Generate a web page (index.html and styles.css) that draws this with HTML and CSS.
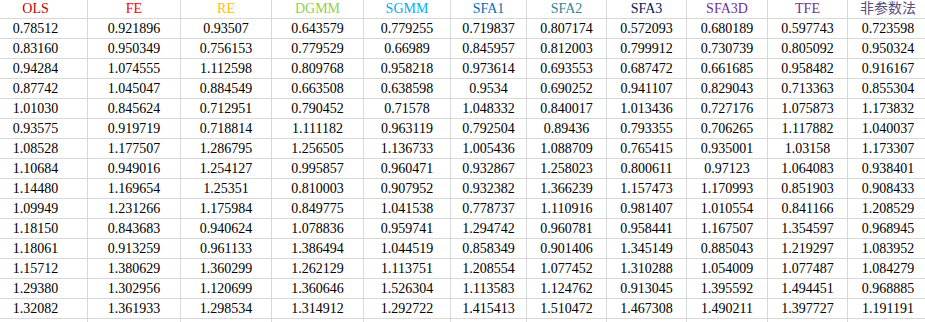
FILE: index.html
```html
<!DOCTYPE html>
<html lang="zh-CN">
<head>
  <meta charset="UTF-8">
  <meta name="viewport" content="width=device-width, initial-scale=1.0">
  <title>效率估计对比</title>
  <link rel="stylesheet" href="styles.css">
</head>
<body>
  <table class="sheet">
    <colgroup>
      <col class="c-first">
      <col class="c-93"><col class="c-91"><col class="c-92"><col class="c-87"><col class="c-76">
      <col class="c-80"><col class="c-80"><col class="c-81"><col class="c-80"><col class="c-81">
    </colgroup>
    <thead>
      <tr>
        <th class="h-ols">OLS</th>
        <th class="h-fe">FE</th>
        <th class="h-re">RE</th>
        <th class="h-dgmm">DGMM</th>
        <th class="h-sgmm">SGMM</th>
        <th class="h-sfa1">SFA1</th>
        <th class="h-sfa2">SFA2</th>
        <th class="h-sfa3">SFA3</th>
        <th class="h-sfa3d">SFA3D</th>
        <th class="h-tfe">TFE</th>
        <th class="h-np">非参数法</th>
      </tr>
    </thead>
    <tbody id="rows">
      <!-- filled from data below -->
    </tbody>
  </table>

  <script>
    const data = [
      ['0.78512', '0.921896', '0.93507', '0.643579', '0.779255', '0.719837', '0.807174', '0.572093', '0.680189', '0.597743', '0.723598'],
      ['0.83160', '0.950349', '0.756153', '0.779529', '0.66989', '0.845957', '0.812003', '0.799912', '0.730739', '0.805092', '0.950324'],
      ['0.94284', '1.074555', '1.112598', '0.809768', '0.958218', '0.973614', '0.693553', '0.687472', '0.661685', '0.958482', '0.916167'],
      ['0.87742', '1.045047', '0.884549', '0.663508', '0.638598', '0.9534', '0.690252', '0.941107', '0.829043', '0.713363', '0.855304'],
      ['1.01030', '0.845624', '0.712951', '0.790452', '0.71578', '1.048332', '0.840017', '1.013436', '0.727176', '1.075873', '1.173832'],
      ['0.93575', '0.919719', '0.718814', '1.111182', '0.963119', '0.792504', '0.89436', '0.793355', '0.706265', '1.117882', '1.040037'],
      ['1.08528', '1.177507', '1.286795', '1.256505', '1.136733', '1.005436', '1.088709', '0.765415', '0.935001', '1.03158', '1.173307'],
      ['1.10684', '0.949016', '1.254127', '0.995857', '0.960471', '0.932867', '1.258023', '0.800611', '0.97123', '1.064083', '0.938401'],
      ['1.14480', '1.169654', '1.25351', '0.810003', '0.907952', '0.932382', '1.366239', '1.157473', '1.170993', '0.851903', '0.908433'],
      ['1.09949', '1.231266', '1.175984', '0.849775', '1.041538', '0.778737', '1.110916', '0.981407', '1.010554', '0.841166', '1.208529'],
      ['1.18150', '0.843683', '0.940624', '1.078836', '0.959741', '1.294742', '0.960781', '0.958441', '1.167507', '1.354597', '0.968945'],
      ['1.18061', '0.913259', '0.961133', '1.386494', '1.044519', '0.858349', '0.901406', '1.345149', '0.885043', '1.219297', '1.083952'],
      ['1.15712', '1.380629', '1.360299', '1.262129', '1.113751', '1.208554', '1.077452', '1.310288', '1.054009', '1.077487', '1.084279'],
      ['1.29380', '1.302956', '1.120699', '1.360646', '1.526304', '1.113583', '1.124762', '0.913045', '1.395592', '1.494451', '0.968885'],
      ['1.32082', '1.361933', '1.298534', '1.314912', '1.292722', '1.415413', '1.510472', '1.467308', '1.490211', '1.397727', '1.191191'],
      ['', '', '', '', '', '', '', '', '', '', '']
    ];

    const tbody = document.getElementById('rows');
    data.forEach(row => {
      const tr = document.createElement('tr');
      row.forEach(val => {
        const td = document.createElement('td');
        td.textContent = val;
        tr.appendChild(td);
      });
      tbody.appendChild(tr);
    });
  </script>
</body>
</html>
```

FILE: styles.css
```css
html, body {
  margin: 0;
  padding: 0;
  background: #fff;
  overflow: hidden;
}

body {
  width: 925px;
  height: 322px;
  font-family: 'Liberation Serif', 'Noto Sans CJK SC', serif;
  font-size: 14px;
  color: #000;
}

.sheet {
  table-layout: fixed;
  border-collapse: collapse;
  margin: -2px 0 0 -17px;
  width: 945px;
}

.c-first { width: 104px; }
.c-93 { width: 93px; }
.c-92 { width: 92px; }
.c-91 { width: 91px; }
.c-87 { width: 87px; }
.c-81 { width: 81px; }
.c-80 { width: 80px; }
.c-76 { width: 76px; }

th, td {
  height: 20px;
  padding: 0;
  box-sizing: border-box;
  border: 1px solid #d9d9d9;
  text-align: center;
  vertical-align: middle;
  line-height: 18px;
  white-space: nowrap;
  overflow: hidden;
}

th {
  font-weight: normal;
}

td {
  padding-top: 1px;
}

.h-ols { color: #c00000; }
.h-fe { color: #ff0000; }
.h-re { color: #ffc000; }
.h-dgmm { color: #92d050; }
.h-sgmm { color: #00b0f0; }
.h-sfa1 { color: #0070c0; }
.h-sfa2 { color: #31859c; }
.h-sfa3 { color: #002060; }
.h-sfa3d { color: #7030a0; }
.h-tfe { color: #7030a0; }
.h-np { color: #604a7b; }
```
